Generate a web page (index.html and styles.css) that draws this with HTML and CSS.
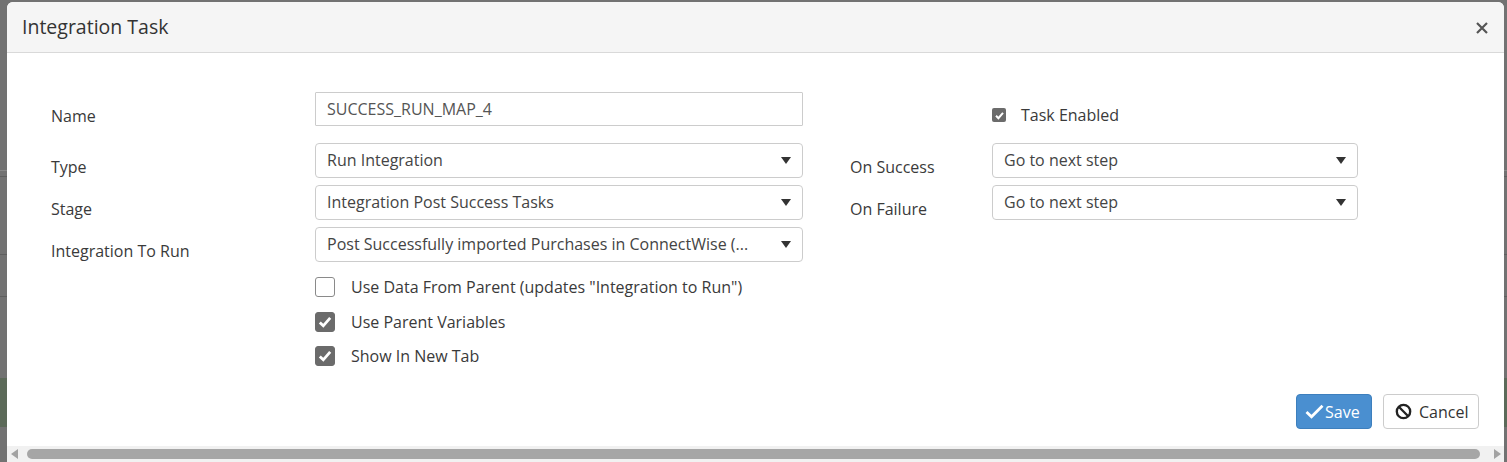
FILE: index.html
```html
<!DOCTYPE html>
<html>
<head>
<meta charset="utf-8">
<link rel="stylesheet" href="styles.css">
</head>
<body>
<div class="modal">
  <div class="modal-header">
    <h4 class="modal-title">Integration Task</h4>
    <button class="close" aria-label="Close"><svg width="12" height="12" viewBox="0 0 12 12"><path d="M1 1L11 11M11 1L1 11" stroke="#555" stroke-width="2.2" fill="none"/></svg></button>
  </div>
  <div class="modal-body">
    <div class="form-row">
      <label class="lbl">Name</label>
      <div class="input">SUCCESS_RUN_MAP_4</div>
      <span></span>
      <span></span>
      <div class="task-enabled"><span class="cb-small"><svg width="11" height="11" viewBox="0 0 11 11"><path d="M2 5.8L4.4 8.2L9 2.8" stroke="#fff" stroke-width="2" fill="none"/></svg></span><span>Task Enabled</span></div>
    </div>
    <div class="form-row r2">
      <label class="lbl">Type</label>
      <div class="select"><span>Run Integration</span><i class="caret"></i></div>
      <span></span>
      <label class="lbl">On Success</label>
      <div class="select"><span>Go to next step</span><i class="caret"></i></div>
    </div>
    <div class="form-row r3">
      <label class="lbl">Stage</label>
      <div class="select"><span>Integration Post Success Tasks</span><i class="caret"></i></div>
      <span></span>
      <label class="lbl">On Failure</label>
      <div class="select"><span>Go to next step</span><i class="caret"></i></div>
    </div>
    <div class="form-row r3">
      <label class="lbl">Integration To Run</label>
      <div class="select"><span>Post Successfully imported Purchases in ConnectWise (...</span><i class="caret"></i></div>
    </div>
    <div class="checks">
      <div class="check"><span class="cb"></span><span>Use Data From Parent (updates "Integration to Run")</span></div>
      <div class="check"><span class="cb on"><svg width="16" height="16" viewBox="0 0 16 16"><path d="M2.8 8.4L6.3 11.8L13.2 3.8" stroke="#fff" stroke-width="2.8" fill="none"/></svg></span><span>Use Parent Variables</span></div>
      <div class="check"><span class="cb on"><svg width="16" height="16" viewBox="0 0 16 16"><path d="M2.8 8.4L6.3 11.8L13.2 3.8" stroke="#fff" stroke-width="2.8" fill="none"/></svg></span><span>Show In New Tab</span></div>
    </div>
    <div class="footer">
      <button class="btn btn-primary"><svg width="19" height="15" viewBox="0 0 19 15"><path d="M1.5 8L6.5 12.8L17.5 1.8" stroke="#fff" stroke-width="2.8" fill="none"/></svg>Save</button>
      <button class="btn btn-default"><svg width="17" height="17" viewBox="0 0 16 16"><circle cx="8" cy="8" r="6.3" stroke="#222" stroke-width="2.2" fill="none"/><path d="M3.8 3.8L12.2 12.2" stroke="#222" stroke-width="2.2"/></svg>Cancel</button>
    </div>
  </div>
  <div class="hscroll">
    <i class="arr left"></i>
    <div class="thumb"></div>
    <i class="arr right"></i>
  </div>
</div>
</body>
</html>
```

FILE: styles.css
```css
* { box-sizing: border-box; }
html, body { margin: 0; height: 462px; overflow: hidden; }
body {
  font-family: "Open Sans", "Liberation Sans", sans-serif;
  font-size: 16px;
  color: #333;
  background-color: #727272;
  background-image:
    linear-gradient(to bottom,
      transparent 0, transparent 170px, #888 170px, #888 171px, transparent 171px,
      transparent 176px, #5f5f5f 176px, #5f5f5f 177px, transparent 177px,
      transparent 254px, #5f5f5f 254px, #5f5f5f 255px, transparent 255px,
      transparent 296px, #5f5f5f 296px, #5f5f5f 297px, transparent 297px,
      transparent 378px, #5c6a59 378px, #5c6a59 427px, transparent 427px);
  padding: 2px 3px 0 7px;
}
.modal {
  width: 1497px;
  height: 460px;
  background: #fff;
  border-radius: 6px 6px 0 0;
  display: flex;
  flex-direction: column;
  overflow: hidden;
}
.modal-header {
  height: 51px;
  background: #f5f5f5;
  border-bottom: 1px solid #d9d9d9;
  display: flex;
  align-items: center;
  justify-content: space-between;
  padding: 0 15px 0 15px;
  flex: none;
}
.modal-title {
  margin: 0;
  font-size: 19.5px;
  font-weight: 400;
  color: #333;
  padding-bottom: 1px;
}
.close {
  border: 0;
  background: none;
  padding: 0;
  width: 14px;
  height: 14px;
  display: flex;
  align-items: center;
  justify-content: center;
  margin-top: 1px;
}
.modal-body {
  flex: 1;
  padding: 39px 25px 0 44px;
  display: flex;
  flex-direction: column;
}
.form-row {
  display: grid;
  grid-template-columns: 264px 488px 47px 142px 366px;
  height: 35px;
  align-items: start;
}
.form-row:first-child { height: 34px; }
.r2 { margin-top: 17px; }
.r3 { margin-top: 7px; }
.lbl {
  padding-top: 13px;
  line-height: 22px;
  color: #3a3a3a;
}
.input, .select {
  height: 100%;
  border: 1px solid #ccc;
  display: flex;
  align-items: center;
  padding: 0 11px;
  color: #555;
  white-space: nowrap;
}
.input { height: 34px; border-radius: 1px; }
.select {
  height: 35px;
  border-radius: 4px;
  justify-content: space-between;
  color: #444;
  padding-bottom: 1px;
}
.caret {
  width: 0;
  height: 0;
  border-left: 5px solid transparent;
  border-right: 5px solid transparent;
  border-top: 7px solid #333;
}
.task-enabled {
  display: flex;
  align-items: center;
  gap: 15px;
  padding-top: 15px;
  line-height: 16px;
  color: #3a3a3a;
}
.cb-small {
  width: 14px;
  height: 14px;
  background: #6b6b6b;
  border-radius: 2px;
  display: flex;
  align-items: center;
  justify-content: center;
  flex: none;
}
.checks {
  margin-left: 264px;
  margin-top: 15px;
  display: flex;
  flex-direction: column;
  gap: 14.5px;
}
.check {
  display: flex;
  align-items: center;
  gap: 16px;
  height: 20px;
  color: #3a3a3a;
}
.cb {
  width: 20px;
  height: 20px;
  border: 1px solid #8a8a8a;
  border-radius: 3px;
  background: #fff;
  display: flex;
  align-items: center;
  justify-content: center;
  flex: none;
}
.cb.on { background: #6b6b6b; border-color: #6b6b6b; }
.footer {
  display: flex;
  justify-content: flex-end;
  gap: 11px;
  margin-top: 28px;
}
.btn {
  height: 35px;
  font-family: inherit;
  font-size: 16px;
  border-radius: 4px;
  display: flex;
  align-items: center;
  padding: 0 12px;
  gap: 1px;
}
.btn svg { flex: none; }
.btn-primary {
  background: #4a8fd0;
  border: 1px solid #3d7fbd;
  color: #fff;
  width: 76px;
  padding: 0 8px;
}
.btn-default {
  background: #fff;
  border: 1px solid #ccc;
  color: #333;
  width: 96px;
  padding: 0 8px 0 11px;
  gap: 7px;
}
.hscroll {
  flex: none;
  height: 16px;
  background: #f1f1f1;
  display: flex;
  align-items: center;
  padding: 0 3px 0 4px;
  gap: 9px;
}
.thumb {
  flex: 1;
  height: 10px;
  background: #a6a6a6;
  border-radius: 5px;
}
.arr {
  width: 0; height: 0;
  border-top: 5px solid transparent;
  border-bottom: 5px solid transparent;
}
.arr.left { border-right: 7px solid #a3a3a3; }
.arr.right { border-left: 7px solid #a3a3a3; margin-left: 5px; }
```
